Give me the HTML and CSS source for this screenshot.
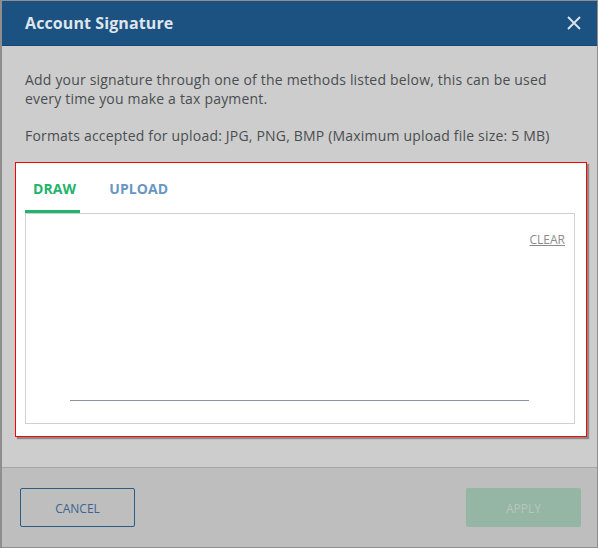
FILE: index.html
```html
<!DOCTYPE html>
<html>
<head>
<meta charset="utf-8">
<link rel="stylesheet" href="styles.css">
</head>
<body>
<div class="dialog">
  <div class="header">
    <h1 class="title">Account Signature</h1>
    <svg class="close" width="14" height="14" viewBox="0 0 14 14"><path d="M1 1L13 13M13 1L1 13" stroke="#dfe5ec" stroke-width="1.8" fill="none"/></svg>
  </div>
  <div class="body">
    <p class="intro">Add your signature through one of the methods listed below, this can be used every time you make a tax payment.</p>
    <p class="formats">Formats accepted for upload: JPG, PNG, BMP (Maximum upload file size: 5 MB)</p>
    <div class="panel">
      <div class="tabs">
        <div class="tab active">DRAW</div>
        <div class="tab">UPLOAD</div>
      </div>
      <div class="canvas">
        <span class="clear">CLEAR</span>
        <div class="sigline"></div>
      </div>
    </div>
  </div>
  <div class="footer">
    <button class="btn cancel">CANCEL</button>
    <button class="btn apply">APPLY</button>
  </div>
</div>
</body>
</html>
```

FILE: styles.css
```css
html, body {
  margin: 0;
  padding: 0;
}
body {
  font-family: "Open Sans", "DejaVu Sans", sans-serif;
  width: 598px;
  height: 548px;
  overflow: hidden;
}
.dialog {
  box-sizing: border-box;
  width: 598px;
  height: 548px;
  border: 1px solid #8e8e8e;
  border-left-width: 2px;
  display: flex;
  flex-direction: column;
  background: #cdcdcd;
}
.header {
  height: 44px;
  background: #1c5281;
  border-bottom: 1px solid #174673;
  display: flex;
  align-items: center;
  justify-content: space-between;
  padding: 0 16px 0 23px;
  flex: none;
}
.title {
  margin: 0;
  font-size: 16px;
  font-weight: 700;
  letter-spacing: 0.1px;
  color: #dfe5ec;
}
.close {
  display: block;
}
.body {
  flex: 1;
  padding: 24px 0 0 13px;
  border-bottom: 1px solid #a6a6a6;
}
.intro, .formats {
  margin: 0 0 0 10px;
  font-size: 14px;
  letter-spacing: 0.19px;
  line-height: 19px;
  color: #4a4d50;
  width: 540px;
}
.intro {
  margin-bottom: 18px;
}
.formats {
  margin-bottom: 17px;
}
.panel {
  width: 550px;
  height: 261px;
  background: #fff;
  border: 1px solid #ff0000;
  box-shadow: 2px 2px 1px #8a8a8a;
  padding: 0 11px 12px 9px;
  display: flex;
  flex-direction: column;
}
.tabs {
  display: flex;
  height: 50px;
  flex: none;
}
.tab {
  font-size: 14px;
  font-weight: 700;
  letter-spacing: 0.1px;
  color: #6a97c2;
  display: flex;
  align-items: center;
  padding: 3px 4px 0 8px;
  margin-right: 21px;
  box-sizing: border-box;
  border-bottom: 3px solid transparent;
}
.tab.active {
  color: #22b46c;
  border-bottom-color: #22b46c;
}
.canvas {
  flex: 1;
  border: 1px solid #d0d0d0;
  position: relative;
}
.clear {
  position: absolute;
  right: 9px;
  top: 17px;
  font-size: 12px;
  color: #8c8c8c;
  text-decoration: underline;
}
.sigline {
  position: absolute;
  left: 44px;
  right: 45px;
  top: 186px;
  height: 1px;
  background: #8d939c;
}
.footer {
  height: 79px;
  flex: none;
  background: #bebebe;
  display: flex;
  justify-content: space-between;
  align-items: flex-start;
  padding: 20px 16px 0 18px;
  box-sizing: border-box;
}
.btn {
  width: 115px;
  height: 39px;
  font-family: "Open Sans", "DejaVu Sans", sans-serif;
  font-size: 12px;
  border-radius: 2px;
  padding: 1px 0 0;
}
.cancel {
  background: transparent;
  border: 1px solid #2b5b89;
  color: #3b6590;
}
.apply {
  background: #95b5a5;
  border: none;
  color: #b7c6be;
}
```
